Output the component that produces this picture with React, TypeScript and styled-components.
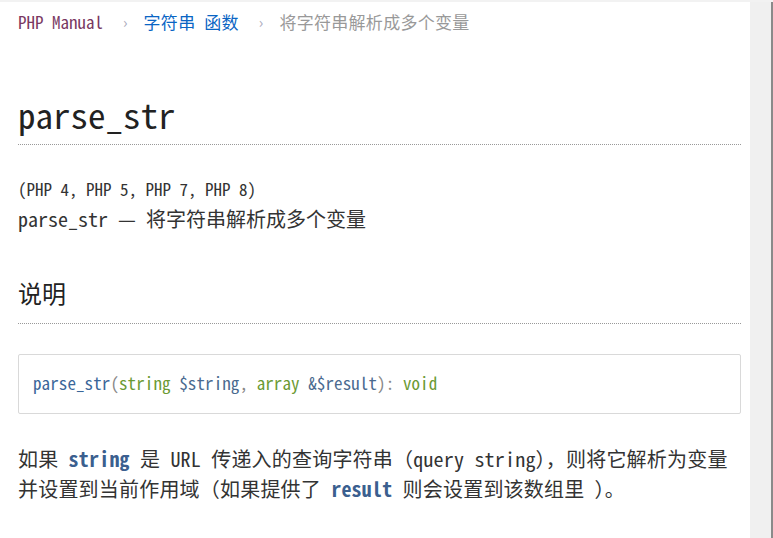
import React from "react";
import styled, { createGlobalStyle } from "styled-components";

const FONT = `"Noto Sans Mono CJK SC", "Liberation Mono", "Noto Sans CJK SC", monospace`;

const Global = createGlobalStyle`
  html, body { margin: 0; padding: 0; background: #fff; }
  body { font-family: ${FONT}; color: #333; }
  #root { height: 538px; }
`;

const Page = styled.div`
  display: flex;
  height: 538px;
  border-top: 2px solid #f2f2f2;
  box-sizing: border-box;
  overflow: hidden;
`;

const Main = styled.main`
  width: 750px;
  flex: none;
  padding: 8px 9px 0 18px;
  box-sizing: border-box;
`;

const Gutter = styled.aside`
  flex: 1;
  background: #f0f0f0;
  border-right: 2px solid #8a8a8a;
`;

const Crumbs = styled.nav`
  display: flex;
  align-items: center;
  font-size: 17px;
  line-height: 24px;
  white-space: nowrap;
`;

const Crumb = styled.span<{ $tone: "home" | "link" | "current" }>`
  color: ${(p) => (p.$tone === "home" ? "#793862" : p.$tone === "link" ? "#0a65c4" : "#999")};
  letter-spacing: ${(p) => (p.$tone === "home" ? "0" : "0.3px")};
`;

const Sep = styled.span`
  color: #aab;
  font-size: 15px;
  padding: 0 16px 0 20px;
`;

const Title = styled.h1`
  margin: 58px 0 0;
  font-size: 35px;
  line-height: 44px;
  font-weight: normal;
  color: #222;
  padding-bottom: 8px;
  border-bottom: 1px dotted #999;
`;

const Version = styled.p`
  margin: 29px 0 0;
  font-size: 17px;
  line-height: 30px;
  color: #333;
`;

const Purpose = styled.p`
  margin: 0;
  font-size: 20px;
  line-height: 30px;
  color: #333;
`;

const Section = styled.h2`
  margin: 41px 0 0;
  font-size: 24px;
  line-height: 36px;
  font-weight: normal;
  color: #222;
  padding-bottom: 12px;
  border-bottom: 1px dotted #999;
`;

const Synopsis = styled.div`
  margin-top: 30px;
  border: 1px solid #d9d9d9;
  border-radius: 2px;
  padding: 13px 14px 15px;
  font-size: 17px;
  line-height: 30px;
  letter-spacing: 0.1px;
  white-space: nowrap;
`;

const Tok = styled.span<{ $kind: "fn" | "punct" | "type" | "var" }>`
  color: ${(p) =>
    p.$kind === "fn" ? "#3a6699" : p.$kind === "type" ? "#6b9a33" : p.$kind === "var" ? "#4a6a8f" : "#888"};
`;

const Para = styled.p`
  margin: 30px 0 0;
  font-size: 20px;
  line-height: 30px;
  letter-spacing: 0.2px;
  color: #333;
`;

const Param = styled.code`
  font-family: ${FONT};
  font-weight: bold;
  color: #3b5f8f;
`;

export default function App() {
  return (
    <>
      <Global />
      <Page>
        <Main>
          <Crumbs>
            <Crumb $tone="home">PHP Manual</Crumb>
            <Sep>›</Sep>
            <Crumb $tone="link">字符串 函数</Crumb>
            <Sep>›</Sep>
            <Crumb $tone="current">将字符串解析成多个变量</Crumb>
          </Crumbs>
          <Title>parse_str</Title>
          <Version>(PHP 4, PHP 5, PHP 7, PHP 8)</Version>
          <Purpose>parse_str — 将字符串解析成多个变量</Purpose>
          <Section>说明</Section>
          <Synopsis>
            <Tok $kind="fn">parse_str</Tok>
            <Tok $kind="punct">(</Tok>
            <Tok $kind="type">string</Tok> <Tok $kind="var">$string</Tok>
            <Tok $kind="punct">, </Tok>
            <Tok $kind="type">array</Tok> <Tok $kind="var">&amp;$result</Tok>
            <Tok $kind="punct">): </Tok>
            <Tok $kind="type">void</Tok>
          </Synopsis>
          <Para>
            {"如果 "}
            <Param>string</Param>
            {" 是 URL 传递入的查询字符串（query string），则将它解析为变量"}
            <br />
            {"并设置到当前作用域（如果提供了 "}
            <Param>result</Param>
            {" 则会设置到该数组里 ）。"}
          </Para>
        </Main>
        <Gutter />
      </Page>
    </>
  );
}
